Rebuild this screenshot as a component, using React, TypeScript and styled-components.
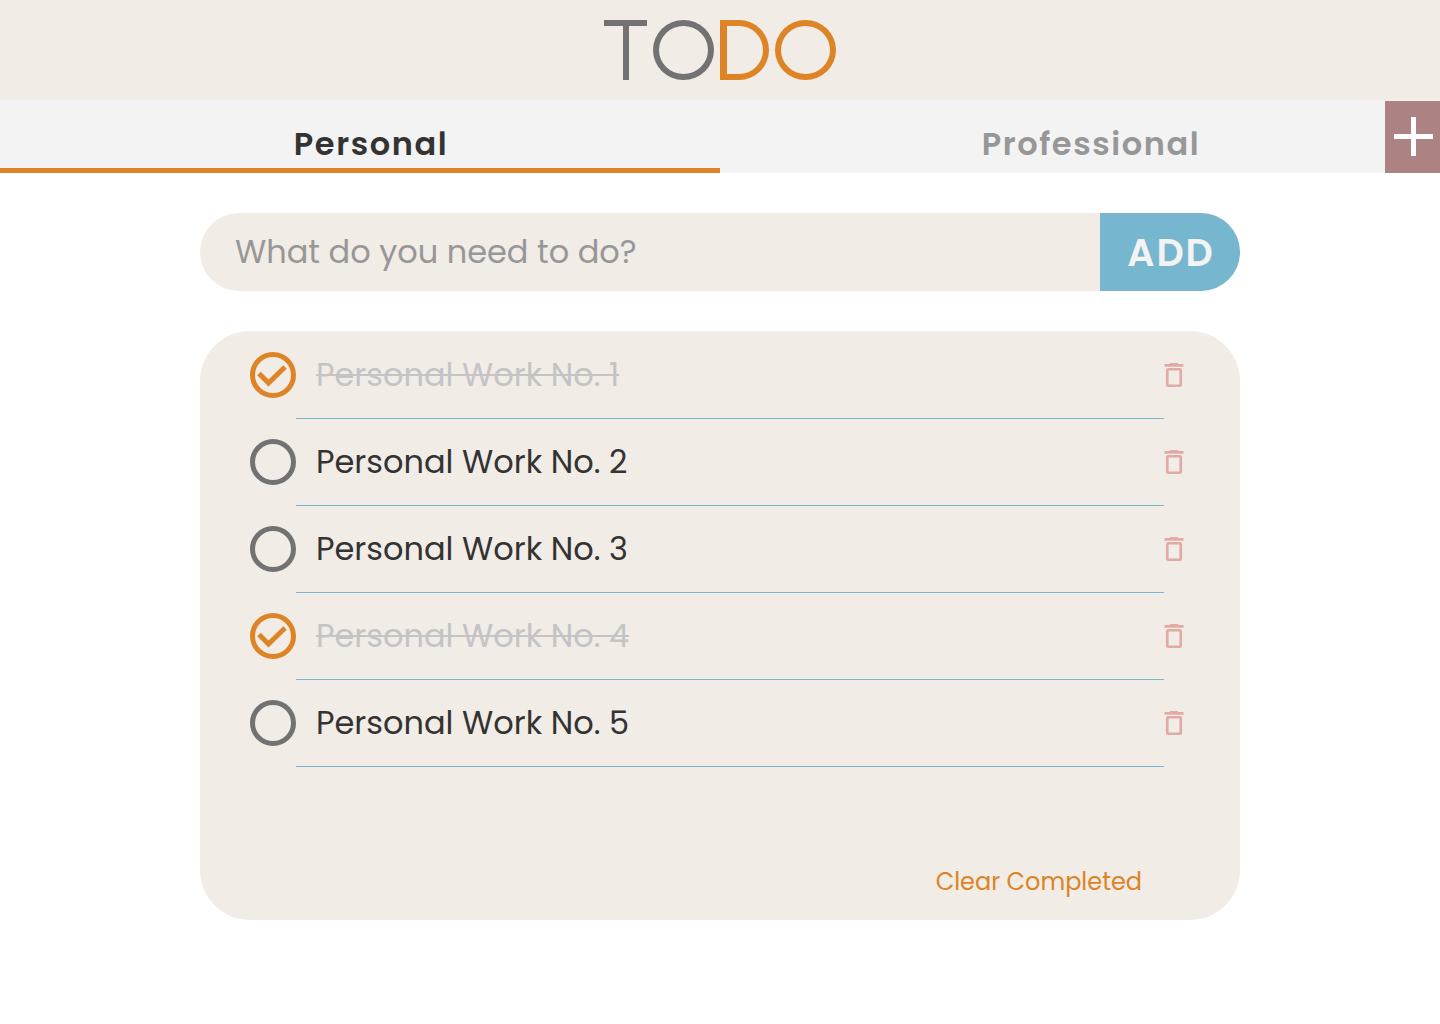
import { FormEvent, useState } from "react";
import styled, { createGlobalStyle } from "styled-components";

const color = {
  sand: "#f1ece6",
  mist: "#f3f3f3",
  ink: "#333333",
  stone: "#727272",
  fog: "#979797",
  faded: "#c4c4c4",
  orange: "#dc8426",
  blue: "#77b6cf",
  mauve: "#ac8282",
  rose: "#e2aaa4",
};

const GlobalStyle = createGlobalStyle`
  *, *::before, *::after { box-sizing: border-box; }
  body {
    margin: 0;
    background: #ffffff;
    color: ${color.ink};
    font-family: Poppins, Inter, "Open Sans", sans-serif;
    font-size: 32px;
  }
  button, input { font: inherit; color: inherit; border: 0; margin: 0; padding: 0; background: none; }
  button { cursor: pointer; }
`;

const Header = styled.header`
  display: flex;
  justify-content: center;
  align-items: center;
  height: 100px;
  background: ${color.sand};
`;

const Logo = styled.h1`
  display: flex;
  gap: 6px;
  height: 60px;
  margin: 0;
`;

const LogoT = styled.span`
  display: flex;
  justify-content: center;
  width: 43px;
  border-top: 6px solid ${color.stone};

  &::after {
    content: "";
    width: 6px;
    background: ${color.stone};
  }
`;

const LogoRing = styled.span<{ $tone: string }>`
  width: 61px;
  border: 6px solid ${(p) => p.$tone};
  border-radius: 50%;
`;

const LogoD = styled.span`
  width: 49px;
  border: 6px solid ${color.orange};
  border-left-width: 7px;
  border-radius: 0 30px 30px 0;
`;

const Tabs = styled.nav`
  position: relative;
  display: grid;
  grid-template-columns: 1fr 1fr;
  height: 73px;
  background: ${color.mist};
`;

const Tab = styled.button<{ $active: boolean }>`
  padding: 19px 0 0 22px;
  border-bottom: 5px solid ${(p) => (p.$active ? color.orange : "transparent")};
  color: ${(p) => (p.$active ? color.ink : color.fog)};
  font-weight: 600;
  letter-spacing: 0.05em;
`;

const NewTabButton = styled.button`
  position: absolute;
  right: 0;
  bottom: 0;
  width: 55px;
  height: 72px;
  background: ${color.mauve};

  svg { display: block; }
`;

const Main = styled.main`
  display: grid;
  gap: 40px;
  max-width: 1120px;
  margin: 0 auto;
  padding: 40px;
`;

const AddForm = styled.form`
  display: flex;
  height: 78px;
  border-radius: 39px;
  overflow: hidden;
  background: ${color.sand};
`;

const TaskInput = styled.input`
  flex: 1;
  min-width: 0;
  padding: 0 35px;
  outline: none;

  &::placeholder { color: ${color.fog}; opacity: 1; }
`;

const AddButton = styled.button`
  width: 140px;
  padding-left: 2px;
  background: ${color.blue};
  color: ${color.mist};
  font-size: 38px;
  font-weight: 600;
  letter-spacing: 0.05em;
`;

const Card = styled.section`
  display: flex;
  flex-direction: column;
  justify-content: space-between;
  min-height: 589px;
  padding: 1px 50px 20px;
  border-radius: 50px;
  background: ${color.sand};
`;

const TaskList = styled.ul`
  margin: 0;
  padding: 0;
  list-style: none;
`;

const TaskRow = styled.li`
  display: grid;
  grid-template-columns: 46px 1fr 26px;
`;

const TaskLabel = styled.label`
  display: grid;
  grid-template-columns: subgrid;
  grid-column: span 2;
  cursor: pointer;
`;

const Check = styled.span`
  position: relative;
  display: grid;
  height: 86px;
  place-items: center;
`;

const CheckInput = styled.input`
  appearance: none;
  width: 46px;
  height: 46px;
  border: 5px solid ${color.stone};
  border-radius: 50%;
  cursor: pointer;

  &:checked { border-color: ${color.orange}; }
`;

const CheckMark = styled.svg`
  position: absolute;
  inset: 20px 0;
  pointer-events: none;
`;

const TaskText = styled.span<{ $done: boolean }>`
  display: flex;
  align-items: center;
  height: 87px;
  padding-left: 20px;
  border-bottom: 1px solid ${color.blue};
  color: ${(p) => (p.$done ? color.faded : color.ink)};

  span {
    text-decoration: ${(p) => (p.$done ? "line-through 2px" : "none")};
  }
`;

const DeleteButton = styled.button`
  display: flex;
  align-items: center;
  height: 86px;
`;

const ClearButton = styled.button`
  align-self: flex-end;
  margin-right: 48px;
  color: ${color.orange};
  font-size: 24px;
  line-height: 36px;
`;

const initialTasks = [
  { id: 1, title: "Personal Work No. 1", done: true },
  { id: 2, title: "Personal Work No. 2", done: false },
  { id: 3, title: "Personal Work No. 3", done: false },
  { id: 4, title: "Personal Work No. 4", done: true },
  { id: 5, title: "Personal Work No. 5", done: false },
];

const tabNames = ["Personal", "Professional"];

export default function App() {
  const [tab, setTab] = useState("Personal");
  const [tasks, setTasks] = useState(initialTasks);
  const [draft, setDraft] = useState("");

  const addTask = (event: FormEvent) => {
    event.preventDefault();
    if (!draft.trim()) return;
    setTasks([...tasks, { id: Date.now(), title: draft.trim(), done: false }]);
    setDraft("");
  };

  const toggle = (id: number) =>
    setTasks(tasks.map((t) => (t.id === id ? { ...t, done: !t.done } : t)));

  return (
    <>
      <GlobalStyle />
      <Header>
        <Logo role="img" aria-label="TODO">
          <LogoT />
          <LogoRing $tone={color.stone} />
          <LogoD />
          <LogoRing $tone={color.orange} />
        </Logo>
      </Header>
      <Tabs>
        {tabNames.map((name) => (
          <Tab key={name} type="button" $active={name === tab} onClick={() => setTab(name)}>
            {name}
          </Tab>
        ))}
        <NewTabButton type="button" aria-label="New tab">
          <svg width="55" height="72" viewBox="0 0 55 72" stroke="#fff" strokeWidth="5">
            <path d="M28.500 16V55M9 35.500H48" />
          </svg>
        </NewTabButton>
      </Tabs>
      <Main>
        <AddForm onSubmit={addTask}>
          <TaskInput
            aria-label="New task"
            placeholder="What do you need to do?"
            value={draft}
            onChange={(e) => setDraft(e.target.value)}
          />
          <AddButton type="submit">ADD</AddButton>
        </AddForm>
        <Card>
          <TaskList>
            {tasks.map((task) => (
              <TaskRow key={task.id}>
                <TaskLabel>
                  <Check>
                    <CheckInput type="checkbox" checked={task.done} onChange={() => toggle(task.id)} />
                    {task.done && (
                      <CheckMark width="46" height="46" viewBox="0 0 46 46" fill="none">
                        <path d="M9 21.500L18.500 31L35 15" stroke={color.orange} strokeWidth="5" />
                      </CheckMark>
                    )}
                  </Check>
                  <TaskText $done={task.done}>
                    <span>{task.title}</span>
                  </TaskText>
                </TaskLabel>
                <DeleteButton
                  type="button"
                  aria-label={`Delete ${task.title}`}
                  onClick={() => setTasks(tasks.filter((t) => t.id !== task.id))}
                >
                  <svg width="20" height="26" viewBox="0 0 20 26" fill="none">
                    <path d="M0.500 2H5.500L6.500 1H13.500L14.500 2H19.500V4.700H0.500Z" fill={color.rose} />
                    <rect x="3.250" y="7.250" width="13.500" height="16.500" rx="1" stroke={color.rose} strokeWidth="2.700" />
                  </svg>
                </DeleteButton>
              </TaskRow>
            ))}
          </TaskList>
          <ClearButton type="button" onClick={() => setTasks(tasks.filter((t) => !t.done))}>
            Clear Completed
          </ClearButton>
        </Card>
      </Main>
    </>
  );
}
